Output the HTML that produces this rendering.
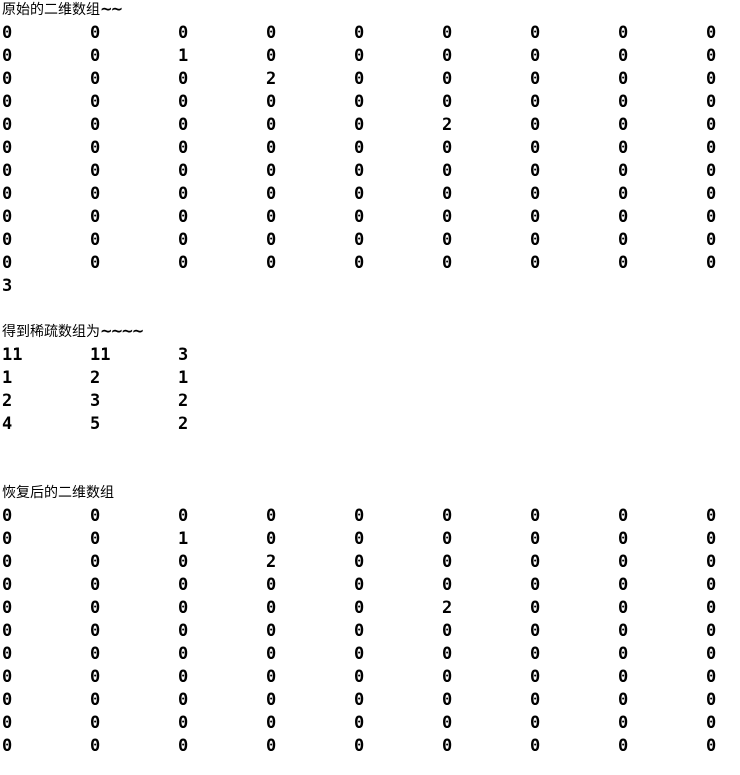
<!DOCTYPE html>
<html><head><meta charset="utf-8"><style>
body{margin:0;background:#fff;width:740px;height:775px;overflow:hidden;}
.l{position:absolute;left:2px;height:23px;line-height:23px;white-space:nowrap;}
.h{font-family:"Noto Sans CJK SC","WenQuanYi Zen Hei",sans-serif;font-size:14px;color:#000;}
.h b{font-family:"DejaVu Sans",sans-serif;font-size:15px;font-weight:bold;letter-spacing:-2px;}
.d{font-family:"DejaVu Sans Mono","Liberation Mono",monospace;font-size:17px;font-weight:bold;color:#000;}
.d span{display:inline-block;width:88px;}
</style></head><body>
<div id="c"></div>
<script>
var c=document.getElementById('c'),y=-1;
function h(t,tl){var e=document.createElement('div');e.className='l h';e.style.top=(y-1)+'px';e.innerHTML=t+(tl?'<b>'+tl+'</b>':'');c.appendChild(e);y+=23;}
function r(a){var e=document.createElement('div');e.className='l d';e.style.top=y+'px';e.innerHTML=a.map(function(v){return '<span>'+v+'</span>'}).join('');c.appendChild(e);y+=23;}
function grid(){for(var i=0;i<11;i++){var a=[0,0,0,0,0,0,0,0,0];if(i==1)a[2]=1;if(i==2)a[3]=2;if(i==4)a[5]=2;r(a);}}
h('原始的二维数组','~~');grid();r([3]);y+=23;
h('得到稀疏数组为','~~~~');r([11,11,3]);r([1,2,1]);r([2,3,2]);r([4,5,2]);y+=46;
h('恢复后的二维数组');grid();
</script>
</body></html>
